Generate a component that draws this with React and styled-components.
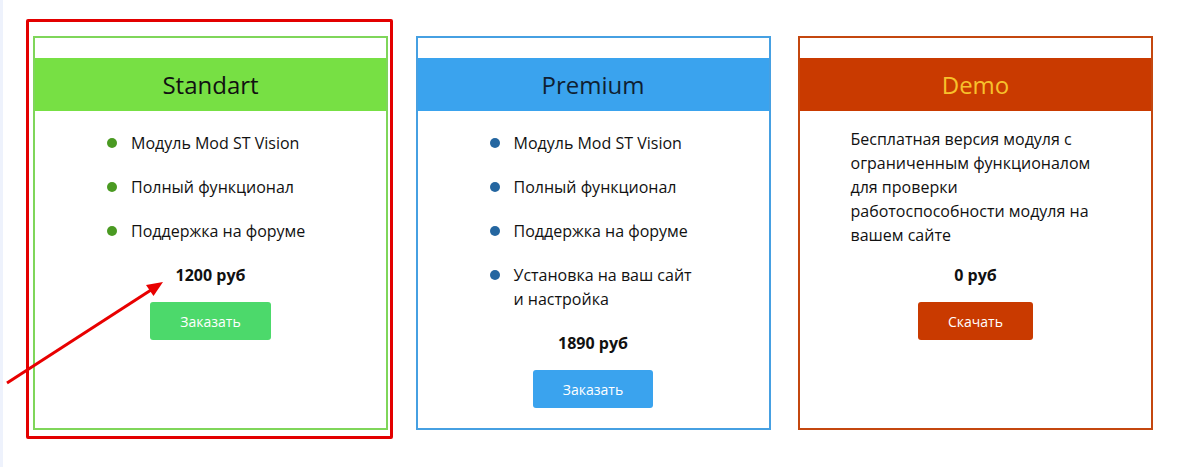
import React from "react";
import styled, { createGlobalStyle } from "styled-components";

const Global = createGlobalStyle`
  html, body { margin: 0; padding: 0; background: #fff; }
  body { font-family: "Open Sans", "Noto Sans", sans-serif; color: #111; }
  * { box-sizing: border-box; }
`;

const Page = styled.div`
  position: relative;
  min-height: 467px;
  border-left: 3px solid #eef2fc;
  padding: 36px 0 0 30px;
`;

const Row = styled.div`
  display: flex;
  gap: 27.5px;
`;

const Card = styled.div`
  width: 355px;
  height: 394px;
  border: 2px solid ${(p) => p.$border};
  padding-top: 20px;
  display: flex;
  flex-direction: column;
  align-items: center;
`;

const Header = styled.div`
  align-self: stretch;
  height: 53px;
  background: ${(p) => p.$bg};
  color: ${(p) => p.$color};
  display: flex;
  align-items: center;
  justify-content: center;
  font-size: 24px;
  font-weight: 400;
  margin-bottom: 16px;
`;

const List = styled.ul`
  list-style: none;
  width: 207px;
  margin: 4px 0 20px;
  padding: 0;
  display: flex;
  flex-direction: column;
  gap: 20px;
`;

const Item = styled.li`
  display: flex;
  gap: 14px;
  font-size: 16px;
  line-height: 24px;
`;

const Dot = styled.span`
  flex-shrink: 0;
  width: 10px;
  height: 10px;
  border-radius: 50%;
  margin-top: 7px;
  background: ${(p) => p.$color};
`;

const Desc = styled.p`
  width: 250px;
  margin: 0 0 16px;
  font-size: 16px;
  line-height: 24px;
`;

const Price = styled.div`
  font-size: 16px;
  line-height: 24px;
  font-weight: 700;
  margin-bottom: 15px;
`;

const Button = styled.button`
  height: 38px;
  padding: 0 30px;
  border: none;
  border-radius: 3px;
  background: ${(p) => p.$bg};
  color: #fff;
  font-family: "Open Sans", "Noto Sans", sans-serif;
  font-size: 14px;
  cursor: pointer;
`;

const Highlight = styled.div`
  position: absolute;
  left: 23px;
  top: 19px;
  width: 367px;
  height: 420px;
  border: 3px solid #e30000;
  border-radius: 2px;
  pointer-events: none;
`;

const ArrowSvg = styled.svg`
  position: absolute;
  left: -3px;
  top: 0;
  pointer-events: none;
`;

const plans = [
  {
    title: "Standart",
    border: "#7fd65a",
    headBg: "#77e044",
    headColor: "#111",
    dot: "#4a9a22",
    btn: "#4cd96b",
    items: ["Модуль Mod ST Vision", "Полный функционал", "Поддержка на форуме"],
    price: "1200 руб",
    action: "Заказать",
  },
  {
    title: "Premium",
    border: "#46a0e2",
    headBg: "#3aa3ee",
    headColor: "#0f1f33",
    dot: "#2466a0",
    btn: "#3aa3ee",
    items: [
      "Модуль Mod ST Vision",
      "Полный функционал",
      "Поддержка на форуме",
      "Установка на ваш сайт и настройка",
    ],
    price: "1890 руб",
    action: "Заказать",
  },
  {
    title: "Demo",
    border: "#c4470f",
    headBg: "#c93a00",
    headColor: "#f7c12c",
    btn: "#c93a00",
    desc: "Бесплатная версия модуля с ограниченным функционалом для проверки работоспособности модуля на вашем сайте",
    price: "0 руб",
    action: "Скачать",
  },
];

export default function App() {
  return (
    <>
      <Global />
      <Page>
        <Row>
          {plans.map((p) => (
            <Card key={p.title} $border={p.border}>
              <Header $bg={p.headBg} $color={p.headColor}>
                {p.title}
              </Header>
              {p.items ? (
                <List>
                  {p.items.map((it) => (
                    <Item key={it}>
                      <Dot $color={p.dot} />
                      <span>{it}</span>
                    </Item>
                  ))}
                </List>
              ) : (
                <Desc>{p.desc}</Desc>
              )}
              <Price>{p.price}</Price>
              <Button $bg={p.btn}>{p.action}</Button>
            </Card>
          ))}
        </Row>
        <Highlight />
        <ArrowSvg width="200" height="467" viewBox="0 0 200 467">
          <line x1="7" y1="383" x2="151" y2="290" stroke="#e80000" strokeWidth="3" />
          <polygon points="163,282 153.5,296 146,285" fill="#e80000" />
        </ArrowSvg>
      </Page>
    </>
  );
}
